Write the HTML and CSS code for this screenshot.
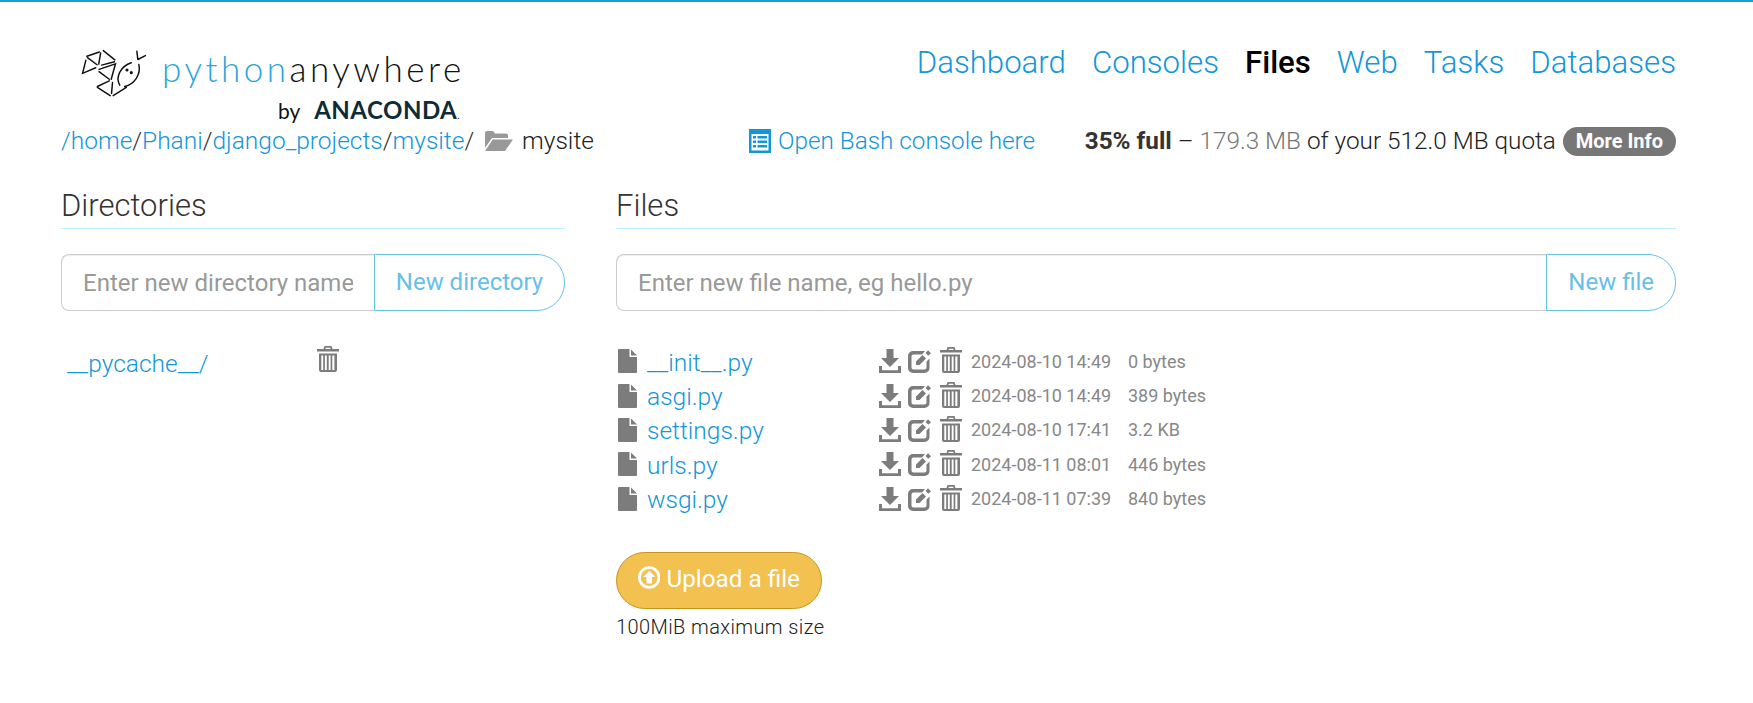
FILE: index.html
```html
<!DOCTYPE html>
<html lang="en">
<head>
<meta charset="UTF-8">
<title>Files | PythonAnywhere</title>
<link rel="stylesheet" href="styles.css">
</head>
<body>
<svg class="sprites" width="0" height="0">
  <symbol id="i-file" viewBox="0 0 19 24"><path d="M1 0h10.500v8H19v15a1 1 0 0 1-1 1H1a1 1 0 0 1-1-1V1a1 1 0 0 1 1-1zM13 .5 19 6.500h-6z"/></symbol>
  <symbol id="i-download" viewBox="0 0 22 24"><path d="M7.500 0h7v9H20l-9 9-9-9h5.500zM0 17h3v4.200h16V17h3v7H0z"/></symbol>
  <symbol id="i-edit" viewBox="0 0 24 24"><path d="M5 2h12l-3 3.400H5.500A2 2 0 0 0 3.500 7.400v11.100a2 2 0 0 0 2 2h11a2 2 0 0 0 2-2v-6l3-3v9.500a5 5 0 0 1-5 5H5a5 5 0 0 1-5-5V7a5 5 0 0 1 5-5zM8 12.500 14.500 6l3.500 3.500-6.500 6.500H8zM20 1.200 23 4.200 20.300 6.800 17.500 4z"/></symbol>
  <symbol id="i-trash" viewBox="0 0 22 26"><path d="M7.500 0h7l1 3H22v2.500H0V3h6.500zM8.800 1.700 8.400 3h5.200l-.4-1.300zM2 7.500h18V24a2 2 0 0 1-2 2H4a2 2 0 0 1-2-2zM4.300 9.500V24h1.900V9.500zm3.600 0V24h1.900V9.500zm3.800 0V24h1.900V9.500zm3.600 0V24h2.100V9.500z"/></symbol>
</svg>

<div class="page">
  <header class="top">
    <div class="logo">
      <div class="logo-row">
        <svg class="logo-mark" viewBox="90 145 205 152">
          <path d="M110 170 148 157M112 174 141 196M152 160 146 194M160 153 195 181M155 197 194 187M107 182 97 222 137 205M147 210 197 193 184 240M147 217 178 240M142 262 178 245M142 265 181 290M190 290 230 265M188 250 185 283M245 190C215 200 195 230 210 258M268 195C275 225 255 255 225 262M265 180 262 155M265 180 288 168"/>
          <circle cx="232" cy="212" r="2.500"/><circle cx="245" cy="220" r="2.500"/>
        </svg>
        <span class="logo-name"><span class="logo-py">python</span>anywhere</span>
      </div>
      <div class="logo-by">by <b>ANACONDA</b><small>.</small></div>
    </div>
    <nav class="nav">
      <a href="#">Dashboard</a>
      <a href="#">Consoles</a>
      <a href="#" class="active">Files</a>
      <a href="#">Web</a>
      <a href="#">Tasks</a>
      <a href="#">Databases</a>
    </nav>
  </header>

  <div class="pathbar">
    <div class="path">
      <a href="#">/home</a>/<a href="#">Phani</a>/<a href="#">django_projects</a>/<a href="#">mysite</a>/
      <svg class="folder" viewBox="0 0 28 20"><path d="M0 2a2 2 0 0 1 2-2h6l2 2.500h11a2 2 0 0 1 2 2V7H7L0 17zM7.800 8.500H28L20 20H0z"/></svg>
      <span class="cwd">mysite</span>
    </div>
    <a href="#" class="bash">
      <svg class="bash-icon" viewBox="0 0 22 24"><path fill-rule="evenodd" d="M0 0h22v24H0zM2.500 5v16.500h17V5zM4 7h3v2.500H4zm4.500 0H18v2.500H8.500zM4 11.500h3V14H4zm4.500 0H18V14H8.500zM4 16h3v2.500H4zm4.500 0H18v2.500H8.500z"/></svg>
      Open Bash console here
    </a>
    <div class="quota">
      <b>35% full</b> – <span class="used">179.3 MB</span> of your 512.0 MB quota
      <a href="#" class="pill">More Info</a>
    </div>
  </div>

  <main class="cols">
    <section class="col-dirs">
      <h2>Directories</h2>
      <form class="newform">
        <input type="text" placeholder="Enter new directory name">
        <button type="button">New directory</button>
      </form>
      <div class="dir-row">
        <a href="#" class="dir-name">__pycache__/</a>
        <svg class="ic ic-trash"><use href="#i-trash"/></svg>
      </div>
    </section>

    <section class="col-files">
      <h2>Files</h2>
      <form class="newform">
        <input type="text" placeholder="Enter new file name, eg hello.py">
        <button type="button">New file</button>
      </form>
      <ul class="files">
        <li>
          <svg class="ic ic-file"><use href="#i-file"/></svg>
          <a href="#" class="fname">__init__.py</a>
          <svg class="ic ic-dl"><use href="#i-download"/></svg>
          <svg class="ic ic-edit"><use href="#i-edit"/></svg>
          <svg class="ic ic-trash"><use href="#i-trash"/></svg>
          <span class="fdate">2024-08-10 14:49</span><span class="fsize">0 bytes</span>
        </li>
        <li>
          <svg class="ic ic-file"><use href="#i-file"/></svg>
          <a href="#" class="fname">asgi.py</a>
          <svg class="ic ic-dl"><use href="#i-download"/></svg>
          <svg class="ic ic-edit"><use href="#i-edit"/></svg>
          <svg class="ic ic-trash"><use href="#i-trash"/></svg>
          <span class="fdate">2024-08-10 14:49</span><span class="fsize">389 bytes</span>
        </li>
        <li>
          <svg class="ic ic-file"><use href="#i-file"/></svg>
          <a href="#" class="fname">settings.py</a>
          <svg class="ic ic-dl"><use href="#i-download"/></svg>
          <svg class="ic ic-edit"><use href="#i-edit"/></svg>
          <svg class="ic ic-trash"><use href="#i-trash"/></svg>
          <span class="fdate">2024-08-10 17:41</span><span class="fsize">3.2 KB</span>
        </li>
        <li>
          <svg class="ic ic-file"><use href="#i-file"/></svg>
          <a href="#" class="fname">urls.py</a>
          <svg class="ic ic-dl"><use href="#i-download"/></svg>
          <svg class="ic ic-edit"><use href="#i-edit"/></svg>
          <svg class="ic ic-trash"><use href="#i-trash"/></svg>
          <span class="fdate">2024-08-11 08:01</span><span class="fsize">446 bytes</span>
        </li>
        <li>
          <svg class="ic ic-file"><use href="#i-file"/></svg>
          <a href="#" class="fname">wsgi.py</a>
          <svg class="ic ic-dl"><use href="#i-download"/></svg>
          <svg class="ic ic-edit"><use href="#i-edit"/></svg>
          <svg class="ic ic-trash"><use href="#i-trash"/></svg>
          <span class="fdate">2024-08-11 07:39</span><span class="fsize">840 bytes</span>
        </li>
      </ul>
      <button type="button" class="upload">
        <svg class="upload-icon" viewBox="0 0 24 24"><path fill-rule="evenodd" d="M12 0a12 12 0 1 1 0 24 12 12 0 0 1 0-24zm0 3a9 9 0 1 0 0 18 9 9 0 0 0 0-18zm0 1.800 6.500 6.700H15v7H9v-7H5.500z"/></svg>
        Upload a file
      </button>
      <p class="maxsize">100MiB maximum size</p>
    </section>
  </main>
</div>
</body>
</html>
```

FILE: styles.css
```css
* {
  box-sizing: border-box;
}
body {
  margin: 0;
  border-top: 2px solid #14a0d6;
  background: #fff;
  color: #333;
  font-family: Roboto, sans-serif;
  font-weight: 300;
}
a {
  color: #1496d8;
  text-decoration: none;
}
.sprites {
  display: block;
  height: 0;
}
.page {
  padding: 0 77px 0 61px;
}

/* header */
.top {
  display: flex;
  justify-content: space-between;
  height: 121px;
}
.logo {
  margin-left: 19px;
  padding-top: 40px;
  width: 400px;
}
.logo-row {
  display: flex;
  align-items: center;
  height: 52px;
}
.logo-mark {
  width: 68px;
  height: 50px;
  margin-top: 9px;
  fill: #000;
  stroke: #111;
  stroke-width: 4.500;
  stroke-linecap: round;
}
.logo-mark path {
  fill: none;
}
.logo-name {
  margin-left: 14px;
  font-family: Lato, sans-serif;
  font-size: 35px;
  font-weight: 300;
  letter-spacing: 3.500px;
  color: #111;
  white-space: nowrap;
}
.logo-py {
  color: #2aa5dc;
}
.logo-by {
  margin-top: 4px;
  padding-left: 198px;
  font-size: 21px;
  font-family: Lato, sans-serif;
  font-weight: 400;
  color: #111;
  line-height: 24px;
  white-space: nowrap;
}
.logo-by b {
  margin-left: 9px;
  color: #0e2b36;
  font-weight: 700;
  font-size: 24px;
  letter-spacing: .5px;
}
.logo-by small {
  font-size: 10px;
  color: #0e2b36;
}
.nav {
  display: flex;
  gap: 26px;
  padding-top: 41px;
  font-size: 31.200px;
  line-height: 40px;
}
.nav .active {
  color: #000;
  font-weight: 500;
}

/* path and quota row */
.pathbar {
  display: flex;
  align-items: center;
  height: 35px;
  font-size: 24.300px;
}
.path {
  width: 688px;
  font-size: 24.500px;
  white-space: nowrap;
}
.folder {
  width: 28px;
  height: 20px;
  margin: 0 3px 0 5px;
  fill: #999;
  vertical-align: -2px;
}
.cwd {
  color: #222;
}
.bash {
  display: flex;
  align-items: center;
  gap: 7px;
  width: 335px;
}
.bash-icon {
  width: 22px;
  height: 24px;
  fill: #1496d8;
}
.quota {
  flex: 1;
  color: #222;
  white-space: nowrap;
  text-align: right;
}
.quota b {
  font-weight: 700;
  color: #333;
}
.used {
  color: #777;
}
.pill {
  display: inline-block;
  margin-left: 1px;
  padding: 0 13px;
  height: 29px;
  border-radius: 15px;
  background: #777;
  color: #fff;
  font-size: 20px;
  font-weight: 700;
  line-height: 29px;
  vertical-align: 1px;
}

/* columns */
.cols {
  display: grid;
  grid-template-columns: 504px 1fr;
  gap: 51px;
  padding-top: 24px;
}
h2 {
  margin: 0 0 25px;
  padding-top: 4px;
  height: 47px;
  border-bottom: 1px solid #bdeeff;
  font-size: 31px;
  font-weight: 300;
  line-height: 40px;
  color: #333;
}
.newform {
  display: flex;
  height: 57px;
}
.newform input {
  flex: 1;
  min-width: 0;
  padding: 0 21px;
  border: 1px solid #ccc;
  border-right: 0;
  border-radius: 8px 0 0 8px;
  box-shadow: inset 0 1px 1px rgba(0, 0, 0, .075);
  font: 300 24px Roboto, sans-serif;
  outline: 0;
}
.newform input::placeholder {
  color: #999;
  opacity: 1;
  font-weight: 400;
}
.newform button {
  padding: 0 21px 2px;
  border: 1px solid #66c0e8;
  border-radius: 0 28px 28px 0;
  background: #fff;
  color: #66c0e8;
  font: 400 24px Roboto, sans-serif;
}
.col-dirs .newform input {
  width: 313px;
  flex: none;
}
.col-dirs .newform button {
  flex: 1;
  padding: 0 0 2px;
}
.ic {
  display: block;
  fill: #7c7c7c;
}
.ic-trash {
  width: 22px;
  height: 26px;
}
.dir-row {
  display: flex;
  align-items: flex-start;
  padding: 35px 0 0 6px;
}
.dir-name {
  width: 250px;
  padding-top: 1px;
  font-size: 24.500px;
  line-height: 34px;
}

/* file list */
.files {
  margin: 33px 0 0;
  padding: 0;
  list-style: none;
}
.files li {
  display: flex;
  align-items: center;
  height: 34.400px;
}
.ic-file {
  width: 19px;
  height: 24px;
  margin-left: 2px;
}
.fname {
  width: 232px;
  margin-left: 10px;
  padding-top: 3px;
  font-size: 24.500px;
  line-height: 34px;
}
.ic-dl {
  width: 22px;
  height: 24px;
}
.ic-edit {
  width: 24px;
  height: 24px;
  margin-left: 7px;
}
.files .ic-trash {
  margin: -2px 0 0 8px;
}
.fdate {
  width: 157px;
  margin-left: 9px;
  color: #888;
  font-size: 18px;
  font-weight: 400;
}
.fsize {
  color: #888;
  font-size: 18px;
  font-weight: 400;
}
.upload {
  display: flex;
  align-items: center;
  gap: 6px;
  margin-top: 36px;
  padding: 0 21px 3px;
  height: 57px;
  width: 206px;
  border: 1px solid #c8951c;
  border-radius: 29px;
  background: #f3c14f;
  color: #fff;
  font: 400 24.300px Roboto, sans-serif;
  white-space: nowrap;
}
.upload-icon {
  width: 25px;
  height: 25px;
  fill: #fff;
  margin-top: -3px;
}
.maxsize {
  margin: 6px 0 0;
  font-size: 20px;
  font-weight: 300;
  line-height: 24px;
  color: #222;
  letter-spacing: .4px;
}
```
